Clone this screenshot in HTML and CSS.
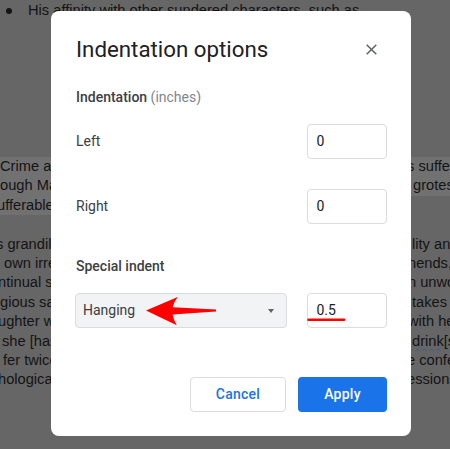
FILE: index.html
```html
<!DOCTYPE html>
<html>
<head>
<meta charset="utf-8">
<link rel="stylesheet" href="styles.css">
</head>
<body>
<div class="doc">
  <div class="bullet-line"><span class="dot"></span><span class="btext">His affinity with other sundered characters, such as</span></div>
  <div class="para p1">
    <div class="line hl"><span class="l">Crime and Punishment</span><span class="r ri-4">s sufferings</span></div>
    <div class="line hl"><span class="l">ough Marmeladov</span><span class="r ri2">grotesque</span></div>
    <div class="line"><span class="l hl li-3">ufferable</span><span class="r"></span></div>
  </div>
  <div class="para p2">
    <div class="line"><span class="l li-4">s grandiloquent</span><span class="r ri1">lity and</span></div>
    <div class="line"><span class="l lp4">own irresponsible</span><span class="r ri-3">nends,</span></div>
    <div class="line"><span class="l li-2">ntinual self</span><span class="r ri-3">n unworthy</span></div>
    <div class="line"><span class="l">gious sacrifice</span><span class="r ri1">takes</span></div>
    <div class="line"><span class="l li-2">ughter who</span><span class="r ri-3">with her</span></div>
    <div class="line"><span class="l lp2">she [has</span><span class="r ri1"><span class="spell">drink</span>[s]</span></div>
    <div class="line"><span class="l lp3">fer twice</span><span class="r ri-4">e confession</span></div>
    <div class="line"><span class="l li-2">hological</span><span class="r ri-4">essions</span></div>
  </div>
</div>

<div class="dialog">
  <div class="header">
    <div class="title">Indentation options</div>
    <div class="close">
      <svg width="11" height="11" viewBox="0 0 11 11"><path d="M0.7 0.7 L10.3 10.3 M10.3 0.7 L0.7 10.3" stroke="#5f6368" stroke-width="1.5" fill="none"/></svg>
    </div>
  </div>
  <div class="section">Indentation <span class="unit">(inches)</span></div>
  <div class="row r1">
    <div class="label">Left</div>
    <div class="input">0</div>
  </div>
  <div class="row r2">
    <div class="label">Right</div>
    <div class="input">0</div>
  </div>
  <div class="section s2">Special indent</div>
  <div class="row r3">
    <div class="select"><span>Hanging</span><span class="caret"></span></div>
    <div class="input">0.5</div>
  </div>
  <div class="buttons">
    <div class="btn cancel">Cancel</div>
    <div class="btn apply">Apply</div>
  </div>
</div>

<svg class="annot" width="450" height="449" viewBox="0 0 450 449">
  <path d="M146 310.4 L177.7 297 Q173.5 302.5 172.6 307.2 L216 309.4 L216 311.4 L172.6 314.4 Q173.3 319.5 176.8 325.3 Z" fill="#ff0000"/>
  <path d="M308.5 319.8 L344 319.8" stroke="#ff0000" stroke-width="2.6" stroke-linecap="round"/>
</svg>
</body>
</html>
```
FILE: styles.css
```css
html, body {
  margin: 0;
  padding: 0;
}
body {
  width: 450px;
  height: 449px;
  background: #666666;
  overflow: hidden;
  position: relative;
  font-family: "Liberation Sans", Arial, sans-serif;
}
.doc {
  color: #141414;
  font-size: 14.67px;
}
.bullet-line {
  display: flex;
  align-items: center;
  height: 20px;
  font-size: 14.67px;
  white-space: nowrap;
}
.dot {
  width: 6px;
  height: 6px;
  border-radius: 50%;
  background: #141414;
  margin-left: 5.5px;
  margin-right: 16.5px;
  margin-top: 2px;
}
.btext {
  line-height: 20px;
}
.p1 {
  margin-top: 137px;
}
.p2 {
  margin-top: 19.5px;
}
.line {
  display: flex;
  justify-content: space-between;
  height: 19.4px;
  line-height: 19.4px;
  white-space: nowrap;
}
.hl {
  background: #717171;
}
.l {
  width: 51px;
  overflow: hidden;
}
.r {
  width: 39px;
  overflow: hidden;
}
.li-2 { text-indent: -2px; }
.li-3 { text-indent: -3px; }
.li-4 { text-indent: -4px; }
.lp2 { text-indent: 2px; }
.lp3 { text-indent: 3px; }
.lp4 { text-indent: 4px; }
.ri1 { text-indent: 1px; }
.ri2 { text-indent: 2px; }
.ri-3 { text-indent: -3px; }
.ri-4 { text-indent: -4px; }
.spell {
  text-decoration: underline wavy #3b5a8c;
  text-decoration-thickness: 1px;
  text-underline-offset: 2px;
}

.dialog {
  position: absolute;
  left: 51px;
  top: 11px;
  width: 360px;
  height: 425px;
  box-sizing: border-box;
  background: #ffffff;
  border-radius: 8px;
  padding: 24px 24px 0 24px;
  font-family: Roboto, "Liberation Sans", Arial, sans-serif;
  color: #3c4043;
  display: flex;
  flex-direction: column;
}
.header {
  display: flex;
  justify-content: space-between;
  align-items: center;
  height: 28px;
}
.title {
  font-size: 22.3px;
  line-height: 28px;
  color: #202124;
  padding-left: 1px;
}
.close {
  width: 32px;
  height: 28px;
  display: flex;
  align-items: center;
  justify-content: center;
}
.close svg {
  display: block;
}
.section {
  margin-top: 23.5px;
  font-size: 14px;
  line-height: 20px;
  font-weight: 500;
  color: #3c4043;
  padding-left: 1px;
}
.unit {
  font-weight: 400;
  color: #80868b;
}
.s2 {
  margin-top: 32px;
}
.row {
  display: flex;
  justify-content: space-between;
  align-items: center;
  height: 35px;
}
.r1 {
  margin-top: 17px;
}
.r2 {
  margin-top: 30px;
}
.r3 {
  margin-top: 17px;
}
.label {
  font-size: 14px;
  color: #3c4043;
  padding-left: 1px;
}
.input {
  width: 80px;
  height: 35px;
  box-sizing: border-box;
  border: 1px solid #dadce0;
  border-radius: 4px;
  padding-left: 8.5px;
  font-size: 14px;
  line-height: 33px;
  color: #202124;
}
.select {
  width: 212px;
  height: 35px;
  box-sizing: border-box;
  border: 1px solid #dadce0;
  border-radius: 4px;
  background: #f1f3f4;
  display: flex;
  align-items: center;
  justify-content: space-between;
  padding: 0 12px 0 7px;
  font-size: 14px;
  color: #3c4043;
}
.caret {
  width: 0;
  height: 0;
  border-left: 3.5px solid transparent;
  border-right: 3.5px solid transparent;
  border-top: 4.5px solid #5f6368;
  margin-top: 1px;
}
.buttons {
  margin-top: 49px;
  display: flex;
  justify-content: flex-end;
  gap: 12px;
}
.btn {
  height: 35px;
  box-sizing: border-box;
  border-radius: 4px;
  display: flex;
  align-items: center;
  justify-content: center;
  font-size: 14px;
  font-weight: 500;
  letter-spacing: 0.25px;
}
.cancel {
  width: 96px;
  border: 1px solid #dadce0;
  color: #1a73e8;
  background: #ffffff;
}
.apply {
  width: 89px;
  background: #1a73e8;
  color: #ffffff;
}
.annot {
  position: absolute;
  left: 0;
  top: 0;
  pointer-events: none;
}
```
